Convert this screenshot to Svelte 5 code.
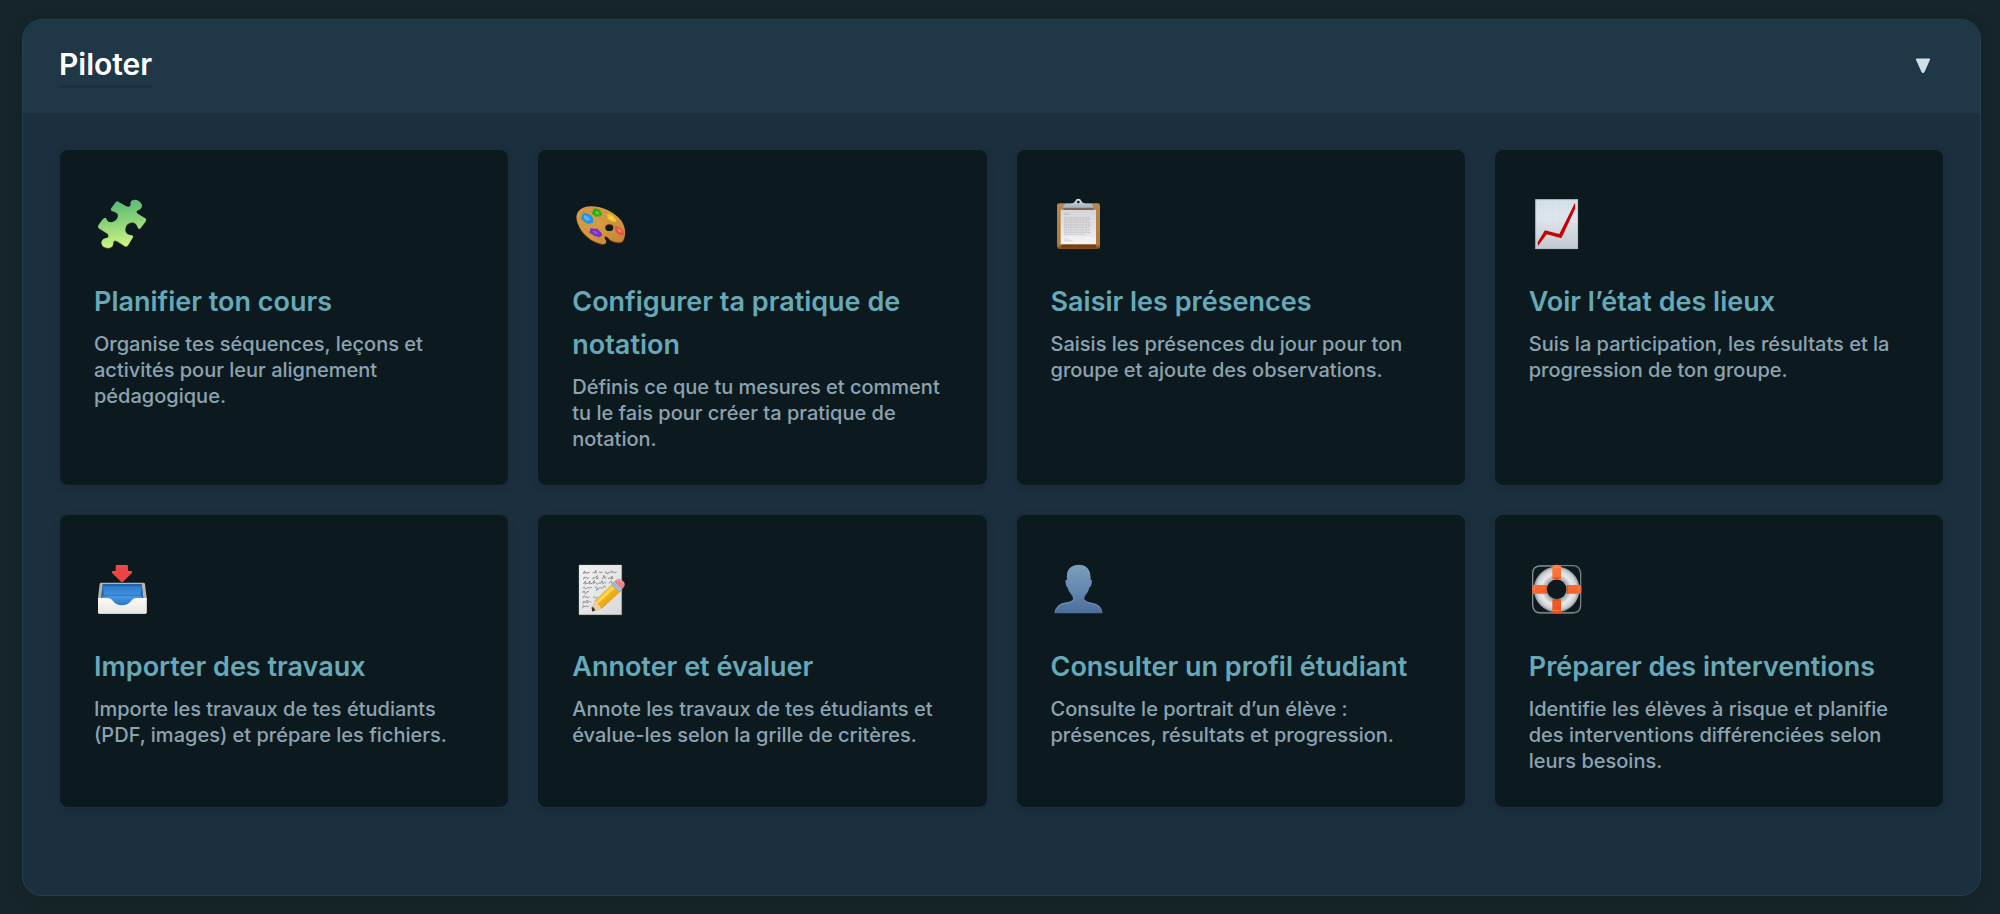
<script>
  let open = $state(true);

  const cards = [
    { icon: 'puzzle', title: 'Planifier ton cours', text: 'Organise tes séquences, leçons et activités pour leur alignement pédagogique.' },
    { icon: 'palette', title: 'Configurer ta pratique de notation', text: 'Définis ce que tu mesures et comment tu le fais pour créer ta pratique de notation.' },
    { icon: 'clipboard', title: 'Saisir les présences', text: 'Saisis les présences du jour pour ton groupe et ajoute des observations.' },
    { icon: 'chart', title: 'Voir l’état des lieux', text: 'Suis la participation, les résultats et la progression de ton groupe.' },
    { icon: 'inbox', title: 'Importer des travaux', text: 'Importe les travaux de tes étudiants (PDF, images) et prépare les fichiers.' },
    { icon: 'memo', title: 'Annoter et évaluer', text: 'Annote les travaux de tes étudiants et évalue-les selon la grille de critères.' },
    { icon: 'person', title: 'Consulter un profil étudiant', text: 'Consulte le portrait d’un élève : présences, résultats et progression.' },
    { icon: 'buoy', title: 'Préparer des interventions', text: 'Identifie les élèves à risque et planifie des interventions différenciées selon leurs besoins.' }
  ];

  const boxes = {
    puzzle: '45 48 162 162',
    palette: '39 48 162 162',
    clipboard: '50 48 162 162',
    chart: '53 48 162 162',
    inbox: '45 45 162 162',
    memo: '39 45 162 162',
    person: '50 45 162 162',
    buoy: '53 45 162 162'
  };
</script>

<main class="page">
  <section class="panel">
    <button class="header" type="button" aria-expanded={open} aria-controls="pilot-cards" onclick={() => (open = !open)}>
      <span class="heading">Piloter</span>
      <svg class="arrow" class:closed={!open} viewBox="0 0 16 16" aria-hidden="true">
        <path d="M1.2 1h13.6L9 14q-1 1.6-2 0z" fill="#cfe0e6" stroke="#cfe0e6" stroke-width="1" stroke-linejoin="round" />
      </svg>
    </button>

    {#if open}
      <div class="grid" id="pilot-cards">
        {#each cards as card}
          <a class="card" href="#{card.icon}">
            <svg class="icon" viewBox={boxes[card.icon]} aria-hidden="true">
              {#if card.icon === 'puzzle'}
                <defs>
                  <linearGradient id="pz" x1="0" y1="0" x2="0.15" y2="1">
                    <stop offset="0" stop-color="#52b278" />
                    <stop offset="0.45" stop-color="#83cf78" />
                    <stop offset="1" stop-color="#caf584" />
                  </linearGradient>
                </defs>
                <path d="M112 61 L139 76 Q149 80 152 73 Q149 58 162 56 Q181 56 186 73 Q186 84 172 88 Q165 94 176 100 L198 113 Q200 117 196 122 L181 142 Q176 145 173 139 Q168 123 155 124 Q138 127 136 143 Q134 158 150 162 Q162 163 159 168 L144 193 Q140 198 134 195 L112 181 Q101 175 100 184 Q101 199 86 201 Q65 201 64 184 Q67 171 82 170 Q90 165 81 157 L57 142 Q52 138 55 133 L68 115 Q76 107 79 113 Q84 126 97 123 Q112 119 114 105 Q115 94 98 90 Q90 88 94 81 L106 65 Q109 60 112 61z" fill="#6c5a24" transform="translate(0 2)" />
                <path d="M112 61 L139 76 Q149 80 152 73 Q149 58 162 56 Q181 56 186 73 Q186 84 172 88 Q165 94 176 100 L198 113 Q200 117 196 122 L181 142 Q176 145 173 139 Q168 123 155 124 Q138 127 136 143 Q134 158 150 162 Q162 163 159 168 L144 193 Q140 198 134 195 L112 181 Q101 175 100 184 Q101 199 86 201 Q65 201 64 184 Q67 171 82 170 Q90 165 81 157 L57 142 Q52 138 55 133 L68 115 Q76 107 79 113 Q84 126 97 123 Q112 119 114 105 Q115 94 98 90 Q90 88 94 81 L106 65 Q109 60 112 61z" fill="url(#pz)" />
              {:else if card.icon === 'palette'}
                <defs>
                  <linearGradient id="pl" x1="0" y1="0" x2="1" y2="1">
                    <stop offset="0" stop-color="#d69a4a" />
                    <stop offset="0.5" stop-color="#d39a43" />
                    <stop offset="1" stop-color="#c68332" />
                  </linearGradient>
                </defs>
                <path d="M90 76 C126 75 163 93 183 118 C196 136 200 162 189 179 C182 186 169 184 160 181 Q149 178 143 169 Q136 163 133 168 Q134 175 139 180 Q139 190 126 189 C94 182 64 158 53 126 C42 97 58 78 90 76z" fill="#70420f" transform="translate(0 3)" />
                <path d="M90 76 C126 75 163 93 183 118 C196 136 200 162 189 179 C182 186 169 184 160 181 Q149 178 143 169 Q136 163 133 168 Q134 175 139 180 Q139 190 126 189 C94 182 64 158 53 126 C42 97 58 78 90 76z" fill="url(#pl)" />
                <path d="M62 96c30-14 77 2 108 40M60 128c20 22 34 37 70 51M118 110c20 4 46 25 62 44M70 83c40-8 76 14 95 30" fill="none" stroke="#a96d28" stroke-width="1.5" opacity=".45" />
                <ellipse cx="148" cy="140" rx="12" ry="10" fill="#0c1a20" />
                <path d="M139 134q7-8 17-1" fill="none" stroke="#8b5517" stroke-width="2" />
                <path d="M66 101l8-6 10 3 9 5 7 11-2 12-14 3-13-8-8-7z" fill="#2394e3" />
                <path d="M72 103l10 3 9 10-9 4-10-8z" fill="#5db5f0" />
                <path d="M99 87l8-5 12 4 7 12-4 8-14 1-12-9z" fill="#29ad13" />
                <path d="M106 90l8 2 5 8-10 0z" fill="#6bd149" />
                <path d="M142 99l7-1 13 9 7 13-3 3-14-3-10-8z" fill="#f6c522" />
                <path d="M149 105l9 5 4 7-11-4z" fill="#ffdc65" />
                <path d="M164 136l8 0 12 7 8 13-2 7-12-1-11-10z" fill="#ea5145" />
                <path d="M171 141l11 7 4 8-10-4z" fill="#ff8772" />
                <path d="M92 141l11 2 9 0 13 14 1 7-9 5-14-5-15-9z" fill="#7b2ec0" />
                <path d="M96 150l12 0 9 10-11 0z" fill="#994bd9" />
              {:else if card.icon === 'clipboard'}
                <defs>
                  <linearGradient id="cb" x1="0" y1="0" x2="0" y2="1"><stop offset="0" stop-color="#b5884c" /><stop offset="0.9" stop-color="#ae7b3c" /><stop offset="1" stop-color="#784719" /></linearGradient>
                  <linearGradient id="cp" x1="0" y1="0" x2="0" y2="1"><stop offset="0" stop-color="#d5d5d7" /><stop offset="1" stop-color="#f0f0f2" /></linearGradient>
                  <linearGradient id="cm" x1="0" y1="0" x2="0" y2="1"><stop offset="0" stop-color="#d9e4ed" /><stop offset="1" stop-color="#a2aeb7" /></linearGradient>
                </defs>
                <rect x="65" y="67" width="129" height="137" rx="7" fill="url(#cb)" />
                <path d="M78 190h104v10H78z" fill="#76410e" />
                <path d="M76 86h106v104H76z" fill="url(#cp)" />
                <path d="M85 81h90v6H85z" fill="#776b60" />
                <path d="M83 80q0-9 8-12h16q10-1 13-8 2-7 9-7t9 7q3 7 13 8h16q7 3 7 12z" fill="url(#cm)" />
                <circle cx="129" cy="63" r="4" fill="#0e1b22" />
                <path d="M86 99h18" stroke="#9b9b9d" stroke-width="2" stroke-dasharray="7 2" />
                <path d="M86 110h77M86 115h81M86 120h75M86 125h82M86 130h78M86 135h82M86 140h74M86 145h81M86 150h76M86 155h81M86 160h64" stroke="#b0b0b3" stroke-width="1.7" stroke-dasharray="9 1.5 6 1" />
                <path d="M86 174h15M86 179h26" stroke="#a3a3a5" stroke-width="1.5" />
                <path d="M78 168h102v21H78z" fill="#fff" opacity=".28" />
              {:else if card.icon === 'chart'}
                <defs>
                  <linearGradient id="ch" x1="0" y1="0" x2="0" y2="1"><stop offset="0" stop-color="#d7e2ea" /><stop offset="0.4" stop-color="#e2e8ed" /><stop offset="1" stop-color="#c4c9cf" /></linearGradient>
                  <pattern id="gr" x="70" y="56" width="7" height="7" patternUnits="userSpaceOnUse"><path d="M7 0H0V7" fill="none" stroke="#aec7da" stroke-width="1.2" opacity=".55" /></pattern>
                </defs>
                <path d="M69 55h128v149H69z" fill="url(#ch)" />
                <path d="M69 55h128v149H69z" fill="url(#gr)" />
                <path d="M70 56h126v147H70z" fill="none" stroke="#a7b1b9" stroke-width="2" />
                <path d="M76 184L97 149Q99 147 103 149L141 159 188 65 189 82 149 168Q147 172 142 170L103 160 77 195z" fill="#c60204" />
              {:else if card.icon === 'inbox'}
                <defs>
                  <linearGradient id="ib" x1="0" y1="0" x2="0" y2="1"><stop offset="0" stop-color="#2876c6" /><stop offset="0.55" stop-color="#4796e3" /><stop offset="1" stop-color="#1769b6" /></linearGradient>
                  <linearGradient id="iw" x1="0" y1="0" x2="0" y2="1"><stop offset="0" stop-color="#fbfaf7" /><stop offset="1" stop-color="#e7e6e2" /></linearGradient>
                </defs>
                <path d="M62 107h129q3 0 4 4l5 42v43q0 4-4 4H58q-4 0-4-4v-43l5-42q1-4 3-4z" fill="#bcb5a9" />
                <path d="M68 111h117l5 43q-63 60-127 0z" fill="url(#ib)" />
                <path d="M68 111h117v7H68zM68 111l-5 43 9-9zM185 111l5 43-9-9z" fill="#2167ad" />
                <path d="M72 145h109" stroke="#216fb8" stroke-width="3" opacity=".7" />
                <path d="M54 153h31q9 1 14 9 10 13 27 13t27-13q6-9 15-9h32v43q0 4-4 4H58q-4 0-4-4z" fill="url(#iw)" />
                <path d="M109 55h33q2 0 2 3v15h11q4 1 1 5l-27 26q-3 2-6 0L96 78q-2-4 2-5h9V58q0-3 2-3z" fill="#ed4344" />
                <path d="M109 56h33M97 74h12M143 74h11" stroke="#ff716d" stroke-width="2" />
              {:else if card.icon === 'memo'}
                <defs>
                  <linearGradient id="me" x1="0" y1="0" x2="1" y2="1"><stop offset="0" stop-color="#f3f3f3" /><stop offset="1" stop-color="#d9d9d9" /></linearGradient>
                  <linearGradient id="pc" x1="0" y1="0" x2="1" y2="1"><stop offset="0" stop-color="#ffdc45" /><stop offset="0.5" stop-color="#f7bd1d" /><stop offset="1" stop-color="#cb7a0b" /></linearGradient>
                </defs>
                <path d="M57 54h128v149H57z" fill="url(#me)" stroke="#c6c6c6" />
                <g fill="none" stroke="#4d4d4d" stroke-width="1.6">
                  <path d="M70 81q3-12 4-9t0 7q4-7 5-1t5-3q2 5 6 0M98 78q5-7 6 1l4-9 1 9M116 78q5-8 7 0l5-3M134 78q4-8 6 0t5-2q2 5 7-2t5 4q4-7 7-1l6-2" />
                  <path d="M70 97q4-13 5-3l5-4q3 10 7 2M97 97l4-7q3 8 6 1l5-5-2 10q4-2 7-4M127 96l5-11q2 17 6 4M145 96q4-9 6-1l6-8-2 9 5-3" />
                  <path d="M70 111l7-9-2 10q5-8 7-1l8-9-2 9q4-4 8-1l7-10-2 10q5-8 8-1t7-2l5 3 5-9 2 9q7-7 10-1M146 110l8-8 2 8q4-6 9-1" />
                  <path d="M68 124q6-8 7-1t7-1l6 1q5-5 8 0M105 123q4-8 7 0l-3 7q7-5 11-8l7 2 6-8 4 7" />
                  <path d="M69 138q2-13 5-2t7-2l6 0M69 154q3-14 7-3l5-1q3 5 7-1M99 152q5-5 7 0t7-3M69 170q2-14 6-3l7-8-1 9q8-9 13-2M68 184q2-15 5-5l7-2q4 6 7-1M94 184q3-9 6-2" />
                </g>
                <path d="M96 185l10-25 58-55q3-2 8 3l13 14q3 4 0 7l-59 55-25 9q-5 1-5-8z" fill="#a66c0d" />
                <path d="M96 185l10-25 20 24-25 9q-5 1-5-8z" fill="#eed3a2" />
                <path d="M106 160l49-47 23 23-52 48z" fill="url(#pc)" />
                <path d="M109 164l50-47 6 7-50 46z" fill="#ffe16b" opacity=".65" />
                <path d="M112 171l50-46 11 12-49 46z" fill="#e19b10" opacity=".35" />
                <path d="M154 112l10-9 23 23-10 10z" fill="#92afcb" />
                <path d="M158 110l22 23M163 106l22 23" stroke="#d0e0ec" stroke-width="2" />
                <path d="M163 103q7-8 15-8 5 0 13 9 6 8 1 15l-6 8z" fill="#ee8184" />
                <path d="M170 101q8-6 16 2l5 7" fill="none" stroke="#ffb0ac" stroke-width="3" />
                <path d="M96 184l3-5 7 10-8 5q-4-2-2-10z" fill="#313335" />
              {:else if card.icon === 'person'}
                <defs>
                  <linearGradient id="pe" x1="0" y1="0" x2="0" y2="1"><stop offset="0" stop-color="#7e9dbc" /><stop offset="0.55" stop-color="#6287b1" /><stop offset="1" stop-color="#4c6d97" /></linearGradient>
                </defs>
                <path d="M130 53Q163 54 165 87L166 98Q172 98 169 108Q168 119 163 120Q159 136 150 145Q145 153 148 159Q154 165 169 167Q198 169 202 199H57Q62 168 92 166Q110 164 113 157Q114 150 109 144Q99 134 96 120Q91 117 91 107Q88 98 95 98Q91 55 130 53z" fill="url(#pe)" />
                <path d="M96 93Q93 56 130 55Q163 57 164 92M59 194Q66 172 91 169Q111 167 116 158M149 159Q155 168 170 170Q193 174 200 194" fill="none" stroke="#83afcc" stroke-width="2" opacity=".65" />
              {:else}
                <defs>
                  <radialGradient id="bu" gradientUnits="userSpaceOnUse" cx="133" cy="127" r="70"><stop offset="0.42" stop-color="#9b9d9e" /><stop offset="0.66" stop-color="#e9eaec" /><stop offset="0.86" stop-color="#cdd0d3" /><stop offset="1" stop-color="#81878a" /></radialGradient>
                  <linearGradient id="bo" x1="0" y1="0" x2="0" y2="1"><stop offset="0" stop-color="#ff7a3e" /><stop offset="1" stop-color="#ed501b" /></linearGradient>
                </defs>
                <path d="M121 57H84Q61 57 61 80V176Q63 198 84 198H182Q204 197 205 176V79Q203 56 181 56H145" fill="none" stroke="#777d7e" stroke-width="4" />
                <path d="M121 56H85Q61 57 61 79V174Q63 196 85 196H181Q203 195 204 175" fill="none" stroke="#b1b5b4" stroke-width="1" />
                <circle cx="133" cy="127" r="49" fill="none" stroke="url(#bu)" stroke-width="39" />
                <path d="M120 55q13-4 26 0v41h-26zM120 156h26v42q-13 4-26 0zM60 114h43v26H60q-3-12 0-26zM163 114h43q3 14 0 26h-43z" fill="url(#bo)" />
                <path d="M121 61h24M122 190h22M66 116v22M199 116v22" stroke="#ff9055" stroke-width="2" />
                <path d="M121 93h24M121 159h24M101 116v23M165 116v23" stroke="#b84619" stroke-width="3" opacity=".7" />
              {/if}
            </svg>
            <h3>{card.title}</h3>
            <p>{card.text}</p>
          </a>
        {/each}
      </div>
    {/if}
  </section>
</main>

<style>
  :global(body) {
    margin: 0;
    background: #162529;
    font-family: Inter, "Liberation Sans", sans-serif;
  }
  .page {
    padding: 19px 19px 18px 22px;
  }
  .panel {
    border: 1px solid #224055;
    border-radius: 20px;
    background: #1b2f3f;
    box-shadow: 0 4px 18px rgba(0, 0, 0, 0.08);
    overflow: hidden;
  }
  .header {
    display: flex;
    align-items: center;
    justify-content: space-between;
    box-sizing: border-box;
    width: 100%;
    padding: 24px 49px 25px 36px;
    border: 0;
    background: #1f3747;
    color: #fff;
    font: inherit;
    text-align: left;
    cursor: pointer;
  }
  .heading {
    padding-bottom: 1px;
    border-bottom: 3px solid #1b3041;
    border-radius: 2px;
    font-size: 30px;
    font-weight: 600;
    line-height: 40px;
  }
  .arrow {
    width: 16px;
    height: 16px;
  }
  .arrow.closed {
    transform: rotate(-90deg);
  }
  .grid {
    display: grid;
    grid-template-columns: repeat(4, minmax(0, 1fr));
    gap: 28px;
    padding: 36px 36px 87px;
  }
  .card {
    padding: 47px 34px 33px;
    border: 1px solid #1b3038;
    border-radius: 9px;
    background: #0c1a20;
    box-shadow: 0 2px 8px rgba(0, 0, 0, 0.1);
    text-decoration: none;
  }
  .icon {
    display: block;
    width: 54px;
    height: 54px;
    margin: 0 0 29px 1px;
  }
  h3 {
    margin: 0 0 8px;
    color: #68a9b8;
    font-size: 27px;
    font-weight: 600;
    line-height: 43px;
  }
  p {
    margin: 0;
    color: #8ca3b0;
    font-size: 20px;
    font-weight: 500;
    line-height: 26px;
  }
</style>
